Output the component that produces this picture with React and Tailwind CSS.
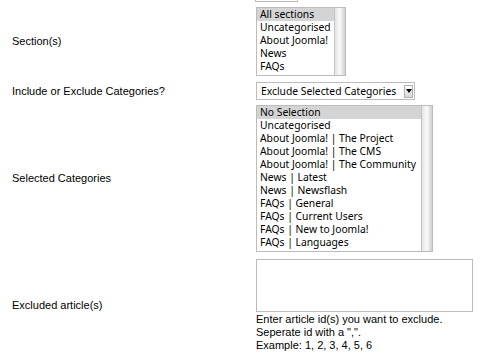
import React from "react";

const sections = ["All sections", "Uncategorised", "About Joomla!", "News", "FAQs"];
const categories = [
  "No Selection",
  "Uncategorised",
  "About Joomla! | The Project",
  "About Joomla! | The CMS",
  "About Joomla! | The Community",
  "News | Latest",
  "News | Newsflash",
  "FAQs | General",
  "FAQs | Current Users",
  "FAQs | New to Joomla!",
  "FAQs | Languages",
];

function ListBox({ items, className }) {
  return (
    <div className={`flex border border-[#bcbcbc] bg-white ${className}`}>
      <div className="flex-1 flex flex-col font-['Noto_Sans',sans-serif] text-[10.3px] leading-[13px] text-black">
        {items.map((item, i) => (
          <div key={item} className={`pl-[3px] whitespace-nowrap ${i === 0 ? "bg-[#d4d4d4]" : ""}`}>
            {item}
          </div>
        ))}
      </div>
      {/* scrollbar track */}
      <div className="w-[11px] border-l border-[#c4c4c4] bg-gradient-to-r from-[#e4e4e4] via-[#fafafa] to-[#cfcfcf]" />
    </div>
  );
}

function Row({ label, children, className = "" }) {
  return (
    <div className={`flex items-center ${className}`}>
      <div className="w-[244px] shrink-0 text-[11px] leading-[13px]">{label}</div>
      <div>{children}</div>
    </div>
  );
}

export default function App() {
  return (
    <div className="w-[480px] h-[355px] overflow-hidden bg-white pl-[12px] font-['Liberation_Sans',Arial,sans-serif] text-black">
      {/* bottom edge of the field above */}
      <div className="ml-[243px] w-[43px] h-[2px] border-x border-b border-[#bcbcbc]" />

      <Row label="Section(s)" className="mt-[5px]">
        <ListBox items={sections} className="w-[90px] h-[69px]" />
      </Row>

      <Row label="Include or Exclude Categories?" className="mt-[6px]">
        <div className="flex items-center w-[159px] h-[18px] border border-[#bcbcbc] bg-white pl-[4px] pr-[1px]">
          <span className="flex-1 font-['Noto_Sans',sans-serif] text-[10.3px] leading-[13px] whitespace-nowrap">
            Exclude Selected Categories
          </span>
          <span className="flex items-center justify-center w-[9px] h-[13px] border border-[#b0b0b0] bg-gradient-to-b from-white to-[#d8d8d8]">
            <svg width="6" height="4" viewBox="0 0 6 4">
              <path d="M0 0h6L3 4z" fill="#000" />
            </svg>
          </span>
        </div>
      </Row>

      <Row label="Selected Categories" className="mt-[5px]">
        <ListBox items={categories} className="w-[177px] h-[147px]" />
      </Row>

      <Row label="Excluded article(s)" className="mt-[7px]">
        <div className="w-[217px] h-[53px] border border-[#bcbcbc] bg-white" />
        <div className="mt-[1px] text-[11px] leading-[13px]">
          <div>Enter article id(s) you want to exclude.</div>
          <div>Seperate id with a ",".</div>
          <div>Example: 1, 2, 3, 4, 5, 6</div>
        </div>
      </Row>
    </div>
  );
}
